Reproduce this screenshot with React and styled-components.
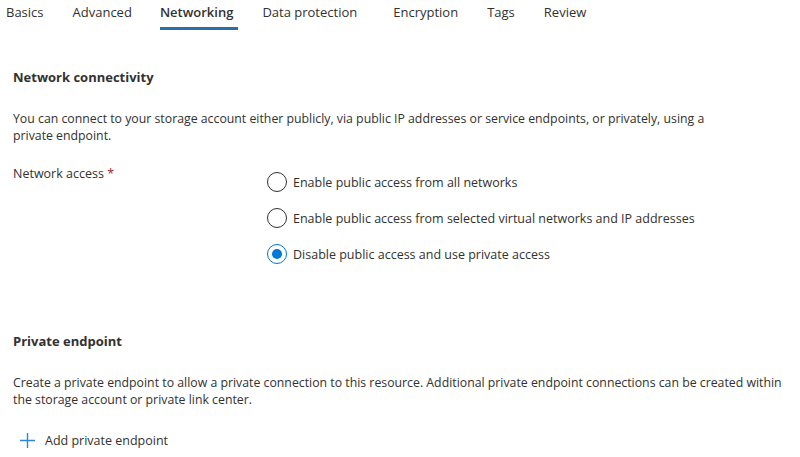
import styled, { createGlobalStyle } from "styled-components";

const Global = createGlobalStyle`
  html, body { margin: 0; padding: 0; background: #fff; }
  body {
    font-family: "Open Sans", "Noto Sans", sans-serif;
    color: #323130;
    font-size: 12px;
  }
`;

const Root = styled.div`
  width: 800px;
  height: 457px;
  overflow: hidden;
`;

const Tabs = styled.nav`
  display: flex;
  gap: 29px;
  padding-left: 6px;
  height: 30px;
`;

const Tab = styled.div`
  font-size: 13px;
  padding-top: 3px;
  height: 30px;
  box-sizing: border-box;
  font-weight: ${(p) => (p.$active ? 600 : 400)};
  border-bottom: 3px solid ${(p) => (p.$active ? "#2a6fa8" : "transparent")};
  padding-right: ${(p) => (p.$active ? "5px" : "0")};
  margin-left: ${(p) => p.$shift || "0"};
  margin-right: ${(p) => p.$extra || "0"};
`;

const Content = styled.div`
  padding-left: 13px;
`;

const Heading = styled.h2`
  margin: ${(p) => p.$top || "39px"} 0 0;
  font-size: 13px;
  font-weight: 700;
  line-height: 17px;
`;

const Paragraph = styled.p`
  margin: 24px 0 0;
  font-size: 12.3px;
  line-height: 17px;
  max-width: ${(p) => p.$max || "725px"};
`;

const FieldRow = styled.div`
  display: flex;
  margin-top: 21px;
`;

const Label = styled.div`
  width: 254px;
  font-size: 12.5px;
  line-height: 17px;
`;

const Required = styled.span`
  color: #a4262c;
`;

const Options = styled.div`
  display: flex;
  flex-direction: column;
  gap: 16px;
  padding-top: 7px;
`;

const Option = styled.label`
  display: flex;
  align-items: center;
  gap: 6px;
  font-size: 12.5px;
  height: 20px;
`;

const Radio = styled.span`
  width: 20px;
  height: 20px;
  box-sizing: border-box;
  border-radius: 50%;
  border: 1px solid ${(p) => (p.$checked ? "#0078d4" : "#323130")};
  display: flex;
  align-items: center;
  justify-content: center;
  &::after {
    content: "";
    width: 10px;
    height: 10px;
    border-radius: 50%;
    background: ${(p) => (p.$checked ? "#0078d4" : "transparent")};
  }
`;

const AddButton = styled.div`
  display: flex;
  align-items: center;
  gap: 9px;
  margin-top: 24px;
  padding-left: 6px;
  font-size: 12.5px;
`;

const tabs = [
  { name: "Basics" },
  { name: "Advanced" },
  { name: "Networking", active: true, shift: "-1px" },
  { name: "Data protection", shift: "-5px", extra: "7px" },
  { name: "Encryption" },
  { name: "Tags" },
  { name: "Review" },
];

const options = [
  "Enable public access from all networks",
  "Enable public access from selected virtual networks and IP addresses",
  "Disable public access and use private access",
];

export default function App() {
  return (
    <Root>
      <Global />
      <Tabs>
        {tabs.map((t) => (
          <Tab
            key={t.name}
            $active={t.active}
            $shift={t.shift}
            $extra={t.extra}
          >
            {t.name}
          </Tab>
        ))}
      </Tabs>
      <Content>
        <Heading>Network connectivity</Heading>
        <Paragraph>
          You can connect to your storage account either publicly, via public IP
          addresses or service endpoints, or privately, using a private endpoint.
        </Paragraph>
        <FieldRow>
          <Label>
            Network access <Required>*</Required>
          </Label>
          <Options>
            {options.map((o, i) => (
              <Option key={o}>
                <Radio $checked={i === 2} />
                {o}
              </Option>
            ))}
          </Options>
        </FieldRow>
        <Heading $top="69px">Private endpoint</Heading>
        <Paragraph $max="790px">
          Create a private endpoint to allow a private connection to this
          resource. Additional private endpoint connections can be created
          within the storage account or private link center.
        </Paragraph>
        <AddButton>
          <svg width="17" height="17" viewBox="0 0 17 17">
            <path d="M8.5 1v15M1 8.5h15" stroke="#2b88d8" strokeWidth="1.4" />
          </svg>
          Add private endpoint
        </AddButton>
      </Content>
    </Root>
  );
}
